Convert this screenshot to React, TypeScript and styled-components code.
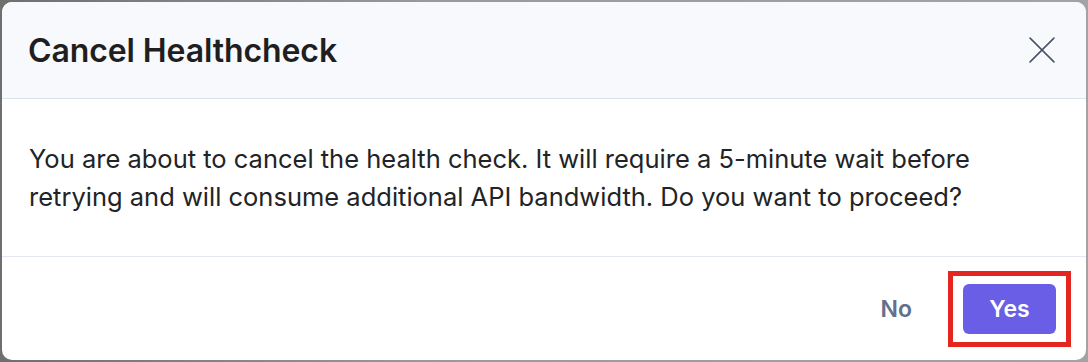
import React from "react";
import styled, { createGlobalStyle } from "styled-components";

const Global = createGlobalStyle`
  html, body { margin: 0; padding: 0; }
  body { font-family: Inter, "Noto Sans", sans-serif; -webkit-font-smoothing: antialiased; }
  * { box-sizing: border-box; }
`;

const Backdrop = styled.div`
  width: 1088px;
  height: 362px;
  padding: 2px;
  background: linear-gradient(90deg, #6f6f6f 0%, #9a9a9a 40%, #a3a3a3 100%);
  display: flex;
`;

const Dialog = styled.div`
  flex: 1;
  background: #ffffff;
  border-radius: 10px;
  overflow: hidden;
  display: flex;
  flex-direction: column;
`;

const Header = styled.div`
  height: 97px;
  flex: none;
  background: #f8f9fc;
  border-bottom: 1px solid #dfe4ec;
  display: flex;
  align-items: center;
  justify-content: space-between;
  padding: 0 30px 0 26px;
`;

const Title = styled.h2`
  margin: 0;
  font-size: 32px;
  font-weight: 600;
  color: #1f1f22;
  letter-spacing: -0.1px;
`;

const CloseButton = styled.button`
  border: none;
  background: transparent;
  padding: 0;
  width: 28px;
  height: 28px;
  display: flex;
  align-items: center;
  justify-content: center;
  cursor: pointer;
  color: #4b5567;
`;

const Body = styled.div`
  height: 158px;
  flex: none;
  border-bottom: 1px solid #e2e6ee;
  padding: 41px 30px 0 27px;
`;

const Message = styled.p`
  margin: 0;
  font-size: 25.5px;
  line-height: 38px;
  color: #222326;
`;

const Footer = styled.div`
  flex: 1;
  display: flex;
  align-items: center;
  justify-content: flex-end;
  gap: 30px;
  padding: 0 30px 0 0;
`;

const TextButton = styled.button`
  border: none;
  background: transparent;
  font-family: inherit;
  font-size: 23px;
  font-weight: 600;
  color: #62708c;
  padding: 0 21px 0 23px;
  height: 50px;
  cursor: pointer;
`;

const PrimaryButton = styled.button`
  position: relative;
  border: none;
  background: #6a5ee6;
  color: #ffffff;
  font-family: inherit;
  font-size: 23px;
  font-weight: 600;
  width: 93px;
  height: 50px;
  border-radius: 6px;
  cursor: pointer;
  &::after {
    content: "";
    position: absolute;
    top: -13px;
    bottom: -13px;
    left: -15px;
    right: -15px;
    border: 5px solid #e3261f;
    pointer-events: none;
  }
`;

export default function App() {
  return (
    <>
      <Global />
      <Backdrop>
        <Dialog>
          <Header>
            <Title>Cancel Healthcheck</Title>
            <CloseButton aria-label="Close">
              <svg width="26" height="26" viewBox="0 0 24 24" fill="none" stroke="currentColor" strokeWidth="1.5" strokeLinecap="round">
                <path d="M1 1L23 23M23 1L1 23" />
              </svg>
            </CloseButton>
          </Header>
          <Body>
            <Message>
              You are about to cancel the health check. It will require a 5-minute wait before retrying and will consume additional API bandwidth. Do you want to proceed?
            </Message>
          </Body>
          <Footer>
            <TextButton>No</TextButton>
            <PrimaryButton>Yes</PrimaryButton>
          </Footer>
        </Dialog>
      </Backdrop>
    </>
  );
}
